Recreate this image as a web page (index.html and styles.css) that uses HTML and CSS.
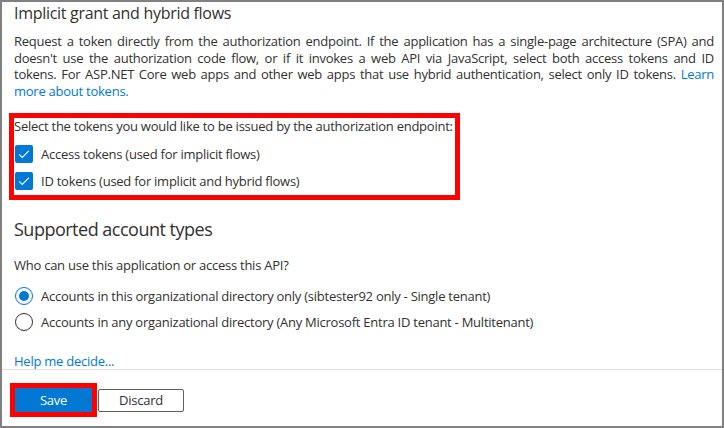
FILE: index.html
```html
<!DOCTYPE html>
<html lang="en">
<head>
  <meta charset="UTF-8" />
  <meta name="viewport" content="width=device-width, initial-scale=1.0"/>
  <title>Authentication</title>
  <link rel="stylesheet" href="styles.css">
</head>
<body>
<div class="frame">
  <div class="scroll">
    <h2 class="title">Implicit grant and hybrid flows</h2>
    <p class="desc">
      <span class="line">Request a token directly from the authorization endpoint. If the application has a single-page architecture (SPA) and</span>
      <span class="line">doesn't use the authorization code flow, or if it invokes a web API via JavaScript, select both access tokens and ID</span>
      <span class="line">tokens. For ASP.NET Core web apps and other web apps that use hybrid authentication, select only ID tokens. <a href="#" class="link">Learn</a></span>
      <a href="#" class="link">more about tokens.</a>
    </p>

    <div class="highlight">
      <div class="label">Select the tokens you would like to be issued by the authorization endpoint:</div>
      <label class="check-row">
        <span class="checkbox">
          <svg width="18" height="18" viewBox="0 0 18 18"><path d="M4.2 9.4 L7.3 12.4 L13.8 5.9" fill="none" stroke="#fff" stroke-width="1.1"/></svg>
        </span>
        Access tokens (used for implicit flows)
      </label>
      <label class="check-row">
        <span class="checkbox">
          <svg width="18" height="18" viewBox="0 0 18 18"><path d="M4.2 9.4 L7.3 12.4 L13.8 5.9" fill="none" stroke="#fff" stroke-width="1.1"/></svg>
        </span>
        ID tokens (used for implicit and hybrid flows)
      </label>
    </div>

    <h2 class="title big">Supported account types</h2>
    <div class="label question">Who can use this application or access this API?</div>
    <label class="radio-row">
      <span class="radio checked"></span>
      Accounts in this organizational directory only (sibtester92 only - Single tenant)
    </label>
    <label class="radio-row">
      <span class="radio"></span>
      Accounts in any organizational directory (Any Microsoft Entra ID tenant - Multitenant)
    </label>
    <a href="#" class="link help">Help me decide...</a>
  </div>

  <div class="footer">
    <div class="save-wrap">
      <button class="btn primary">Save</button>
    </div>
    <button class="btn">Discard</button>
  </div>
</div>
</body>
</html>
```
FILE: styles.css
```css
body {
  margin: 0;
  font-family: "Open Sans", sans-serif;
  font-size: 13px;
  letter-spacing: -0.25px;
  color: #323130;
  background: #fff;
}
.frame {
  width: 724px;
  height: 428px;
  box-sizing: border-box;
  border: 2px solid #808080;
  display: flex;
  flex-direction: column;
}
.scroll {
  height: 367px;
  overflow: hidden;
  padding: 0 8px 0 12px;
}
.title {
  margin: 0;
  font-size: 16px;
  font-weight: 400;
  line-height: 22px;
  letter-spacing: -0.3px;
}
.title.big {
  font-size: 18px;
  line-height: 24px;
  letter-spacing: -0.5px;
  margin-top: 17px;
}
.desc {
  margin: 9px 0 0;
  line-height: 16.67px;
}
.desc .line {
  display: block;
  text-align: justify;
  text-align-last: justify;
}
.link {
  color: #0078d4;
  text-decoration: none;
}
.highlight {
  margin: 13px 0 0 -5px;
  width: 441px;
  border: 5px solid #ff0000;
  padding: 0 0 5px;
}
.label {
  line-height: 17px;
}
.check-row {
  display: flex;
  align-items: center;
  gap: 8px;
  height: 18px;
  margin-top: 9px;
  padding-left: 1px;
}
.highlight .label + .check-row {
  margin-top: 10px;
}
.checkbox {
  width: 18px;
  height: 18px;
  border-radius: 2px;
  background: #0078d4;
  display: flex;
}
.question {
  margin-top: 16px;
}
.radio-row {
  display: flex;
  align-items: center;
  gap: 8px;
  height: 18px;
  margin-top: 8px;
  padding-left: 1px;
}
.question + .radio-row {
  margin-top: 13px;
}
.radio {
  width: 18px;
  height: 18px;
  box-sizing: border-box;
  border: 1px solid #323130;
  border-radius: 50%;
  display: flex;
  align-items: center;
  justify-content: center;
}
.radio.checked {
  border-color: #0078d4;
}
.radio.checked::after {
  content: "";
  width: 10px;
  height: 10px;
  border-radius: 50%;
  background: #0078d4;
}
.help {
  display: block;
  margin-top: 22px;
  line-height: 17px;
}
.footer {
  border-top: 1px solid #e1dfdd;
  display: flex;
  align-items: center;
  padding: 13px 0 0 8px;
}
.save-wrap {
  border: 5px solid #ff0000;
  display: flex;
}
.btn {
  font-family: "Open Sans", sans-serif;
  font-size: 13px;
  letter-spacing: -0.25px;
  height: 23px;
  width: 86px;
  margin-left: 1px;
  padding: 0;
  background: #fff;
  color: #323130;
  border: 1px solid #605e5c;
  border-radius: 2px;
  cursor: pointer;
}
.btn.primary {
  width: 77px;
  height: 24px;
  margin: 0;
  background: #0078d4;
  border: none;
  border-radius: 0;
  color: #fff;
}
```
